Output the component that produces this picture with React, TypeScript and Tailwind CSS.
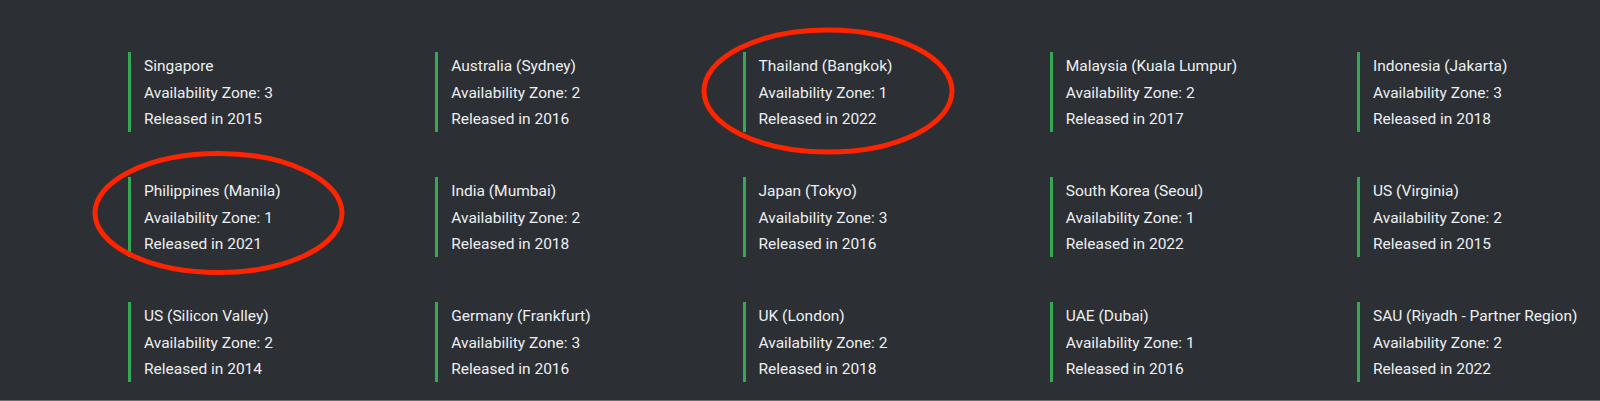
import React from 'react';

type Region = { name: string; zones: number; year: number };

const regions: Region[] = [
  { name: 'Singapore', zones: 3, year: 2015 },
  { name: 'Australia (Sydney)', zones: 2, year: 2016 },
  { name: 'Thailand (Bangkok)', zones: 1, year: 2022 },
  { name: 'Malaysia (Kuala Lumpur)', zones: 2, year: 2017 },
  { name: 'Indonesia (Jakarta)', zones: 3, year: 2018 },
  { name: 'Philippines (Manila)', zones: 1, year: 2021 },
  { name: 'India (Mumbai)', zones: 2, year: 2018 },
  { name: 'Japan (Tokyo)', zones: 3, year: 2016 },
  { name: 'South Korea (Seoul)', zones: 1, year: 2022 },
  { name: 'US (Virginia)', zones: 2, year: 2015 },
  { name: 'US (Silicon Valley)', zones: 2, year: 2014 },
  { name: 'Germany (Frankfurt)', zones: 3, year: 2016 },
  { name: 'UK (London)', zones: 2, year: 2018 },
  { name: 'UAE (Dubai)', zones: 1, year: 2016 },
  { name: 'SAU (Riyadh - Partner Region)', zones: 2, year: 2022 },
];

const RegionCard: React.FC<{ region: Region }> = ({ region }) => (
  <div className="border-l-[3px] border-[#34a853] pl-[13px] pt-[1px] h-[80px] flex flex-col text-[15.5px] leading-[26.5px] text-[#eceff1]">
    <span>{region.name}</span>
    <span>Availability Zone: {region.zones}</span>
    <span>Released in {region.year}</span>
  </div>
);

export default function App() {
  return (
    <div
      className="relative w-[1600px] h-[401px] bg-[#2c3034] border-b border-[#686c70] overflow-hidden"
      style={{ fontFamily: 'Roboto, "Liberation Sans", sans-serif' }}
    >
      <div className="grid grid-cols-[repeat(4,307.25px)_1fr] gap-y-[45px] pl-[128px] pt-[52px]">
        {regions.map((r) => (
          <RegionCard key={r.name} region={r} />
        ))}
      </div>

      {/* highlight rings */}
      <svg className="absolute inset-0 pointer-events-none" width="1600" height="401">
        <ellipse cx="828" cy="91" rx="124" ry="61" fill="none" stroke="#ff2400" strokeWidth="5" />
        <ellipse cx="218.5" cy="213" rx="123.5" ry="59.5" fill="none" stroke="#ff2400" strokeWidth="5" />
      </svg>
    </div>
  );
}
